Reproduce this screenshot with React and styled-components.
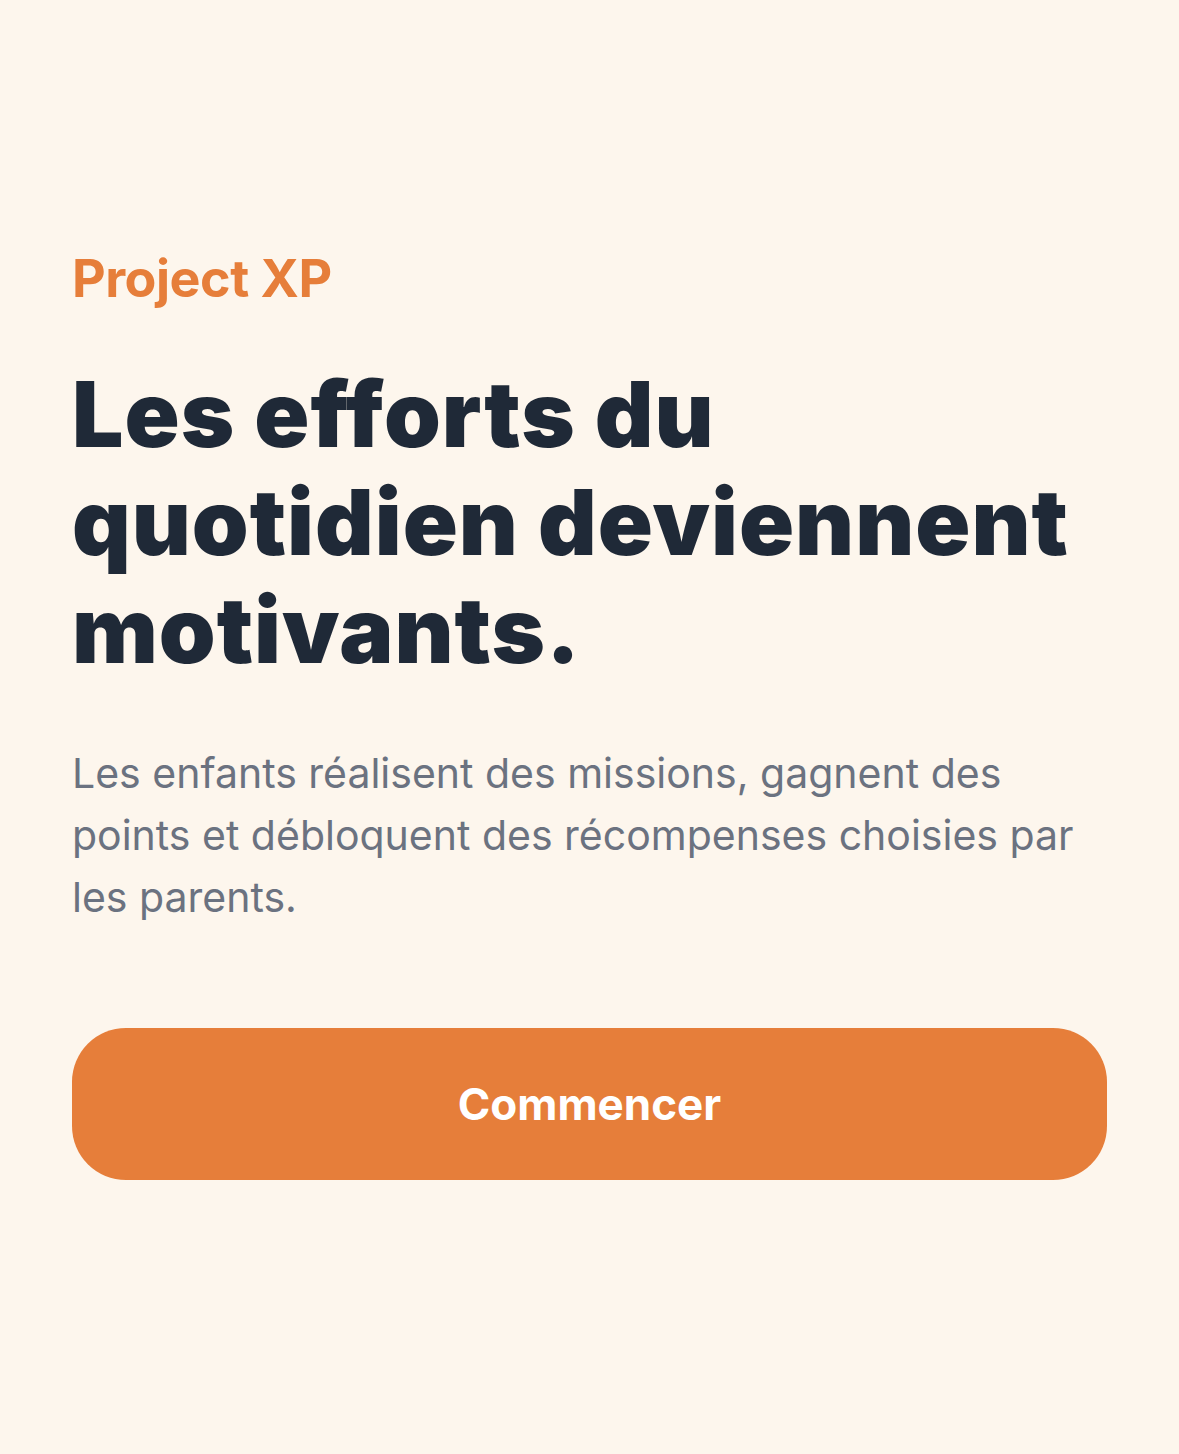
import React from "react";
import styled, { createGlobalStyle } from "styled-components";

const GlobalStyle = createGlobalStyle`
  html, body {
    margin: 0;
    padding: 0;
    background: #fdf6ed;
  }
  body {
    font-family: Inter, "Noto Sans", sans-serif;
    -webkit-font-smoothing: antialiased;
  }
`;

const Screen = styled.main`
  min-height: 1454px;
  box-sizing: border-box;
  padding: 248px 72px 0 72px;
  display: flex;
  flex-direction: column;
  background: #fdf6ed;
`;

const Brand = styled.div`
  font-size: 52px;
  line-height: 62px;
  font-weight: 700;
  color: #e67e3a;
  letter-spacing: -0.5px;
`;

const Headline = styled.h1`
  margin: 50px 0 0 0;
  font-size: 91px;
  line-height: 108px;
  font-weight: 900;
  color: #1f2937;
  letter-spacing: 1px;
`;

const Lead = styled.p`
  margin: 58px 0 0 0;
  font-size: 41px;
  line-height: 62px;
  font-weight: 400;
  color: #6b7280;
`;

const PrimaryButton = styled.button`
  margin-top: 100px;
  width: 100%;
  height: 152px;
  border: none;
  border-radius: 54px;
  background: #e67e3a;
  color: #ffffff;
  font-family: inherit;
  font-size: 44px;
  font-weight: 700;
  cursor: pointer;
`;

export default function App() {
  return (
    <>
      <GlobalStyle />
      <Screen>
        <Brand>Project XP</Brand>
        <Headline>
          Les efforts du
          <br />
          quotidien deviennent
          <br />
          motivants.
        </Headline>
        <Lead>
          Les enfants réalisent des missions, gagnent des
          <br />
          points et débloquent des récompenses choisies par
          <br />
          les parents.
        </Lead>
        <PrimaryButton>Commencer</PrimaryButton>
      </Screen>
    </>
  );
}
